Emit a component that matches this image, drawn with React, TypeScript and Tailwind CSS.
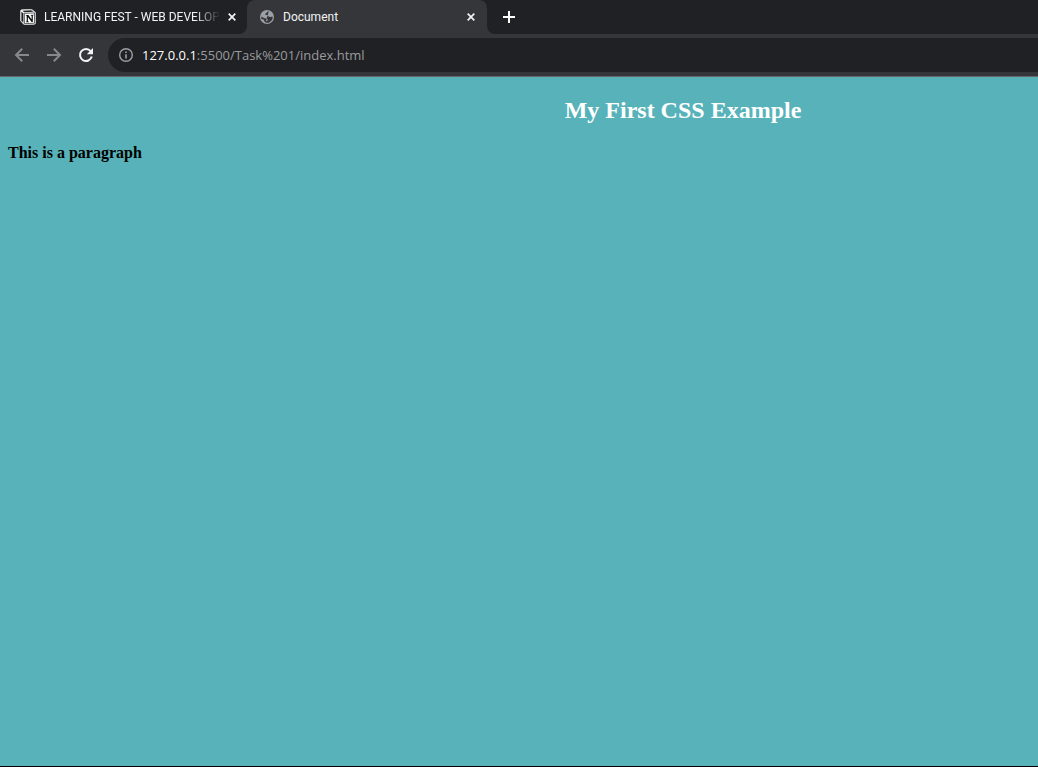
import React from "react";

const CloseIcon = () => (
  <svg width="8" height="8" viewBox="0 0 8 8" aria-hidden="true">
    <path d="M0.7 0.7 7.3 7.3M7.3 0.7 0.7 7.3" stroke="#f1f3f4" strokeWidth="1.7" fill="none" />
  </svg>
);

const NotionIcon = () => (
  <svg className="shrink-0" width="16" height="16" viewBox="0 0 16 16" aria-hidden="true">
    <path d="M1.6.8 11.6.4 15.4 3.4V14.4L14.6 15.2 4 15.6.6 11.8V1.6Z" fill="#fff" stroke="#dcdcdc" strokeWidth=".8" strokeLinejoin="round" />
    <path d="M2.4 1.7 11.2 1.2 13.4 2.7 4.2 3.3Z" fill="#202124" />
    <path d="M1.4 2.6 3.4 4.5V13.8L1.4 11.5Z" fill="#202124" />
    <path d="M4.4 4.4 14.5 3.9V14.2L4.4 14.7Z" fill="#fff" stroke="#202124" strokeWidth=".7" />
    <path d="M5.8 6.1H8.4L11.6 10.6V6.7L10.7 6.4V5.9L13.6 5.7V6.2L12.8 6.6V12.9L11.6 13.1 7.9 8V12.4L9 12.7V13.2L5.9 13.3V12.8L6.7 12.5V6.8L5.8 6.6Z" fill="#0c0c0c" />
  </svg>
);

const GlobeIcon = () => (
  <svg className="shrink-0" width="16" height="16" viewBox="0 0 16 16" aria-hidden="true">
    <circle cx="8" cy="8" r="7" fill="#9aa0a6" />
    <path
      d="M9.8 2.3C8.2 2.6 8.4 3.6 7.2 4 6.2 4.4 6 5.4 6.8 5.9 7.6 6.4 8.6 5.8 9 6.6 9.4 7.6 10 8.2 11.2 8 12.2 7.8 12.8 7.6 13.8 7.8 13.8 10.4 12 13 9.4 13.7 8.4 13.9 7.4 13.8 6.6 13.6V12.4C7.6 12.2 8.8 12 8.8 10.8 8.8 9.6 7.8 9.4 6.6 9.4 5.2 9.4 4 8.2 2.2 7.4 2.1 8.4 2.2 9.2 2.5 10 4 10.2 5.2 10.4 5.2 11.8 5.3 12.8 6 13 6.6 13.6"
      fill="#35363a"
    />
  </svg>
);

const BackIcon = () => (
  <svg width="16" height="16" viewBox="0 0 16 16" aria-hidden="true">
    <path d="M15 8H2.4M8.2 1.8 2 8 8.2 14.2" stroke="#86888a" strokeWidth="2" fill="none" />
  </svg>
);

const ForwardIcon = () => (
  <svg width="16" height="16" viewBox="0 0 16 16" aria-hidden="true">
    <path d="M1 8H13.6M7.8 1.8 14 8 7.8 14.2" stroke="#86888a" strokeWidth="2" fill="none" />
  </svg>
);

const ReloadIcon = () => (
  <svg width="16" height="16" viewBox="0 0 16 16" aria-hidden="true">
    <path d="M12.7 4.2A6 6 0 1 0 13.8 9.6" stroke="#f1f3f4" strokeWidth="2" fill="none" />
    <path d="M15 1V7.2H8.8Z" fill="#f1f3f4" />
  </svg>
);

const InfoIcon = () => (
  <svg width="16" height="16" viewBox="0 0 16 16" aria-hidden="true">
    <circle cx="8" cy="8" r="6.3" stroke="#9aa0a6" strokeWidth="1.4" fill="none" />
    <path d="M8 7.2V11.5M8 4.4V6" stroke="#9aa0a6" strokeWidth="1.6" />
  </svg>
);

const Flare = ({ className }: { className: string }) => (
  <svg className={className} width="8" height="8" viewBox="0 0 8 8" aria-hidden="true">
    <path d="M8 0V8H0A8 8 0 0 0 8 0Z" fill="#35363a" />
  </svg>
);

const TabStrip = () => (
  <div className="flex h-[34px] bg-[#202124] font-['Roboto','Noto_Sans',sans-serif] text-[12px] leading-4 text-[#f1f3f4]">
    <div className="flex w-[247px] shrink-0 items-center justify-between pr-[11px] pl-5">
      <div className="flex items-center gap-2">
        <NotionIcon />
        <span className="whitespace-nowrap [mask-image:linear-gradient(to_right,black_86%,transparent)]">
          LEARNING FEST - WEB DEVELOP
        </span>
      </div>
      <button type="button" aria-label="Close tab" className="flex">
        <CloseIcon />
      </button>
    </div>
    <div className="relative flex w-60 shrink-0 items-center rounded-t-lg bg-[#35363a] pr-3 pl-3">
      <Flare className="absolute bottom-0 -left-2" />
      <Flare className="absolute -right-2 bottom-0 -scale-x-100" />
      <GlobeIcon />
      <span className="ml-2 flex-1">Document</span>
      <button type="button" aria-label="Close tab" className="flex">
        <CloseIcon />
      </button>
    </div>
    <button type="button" aria-label="New tab" className="ml-4 flex items-center">
      <svg width="12" height="12" viewBox="0 0 12 12" aria-hidden="true">
        <path d="M6 0V12M0 6H12" stroke="#fff" strokeWidth="2" />
      </svg>
    </button>
  </div>
);

const Toolbar = () => (
  <div className="flex items-center border-b border-[#67676b] bg-[#35363a] py-1 pl-[14px]">
    <div className="flex gap-4">
      <button type="button" aria-label="Back"><BackIcon /></button>
      <button type="button" aria-label="Forward"><ForwardIcon /></button>
      <button type="button" aria-label="Reload"><ReloadIcon /></button>
    </div>
    <div className="ml-[14px] flex h-[34px] flex-1 items-center gap-2 rounded-l-full bg-[#202124] pl-[10px]">
      <button type="button" aria-label="View site information"><InfoIcon /></button>
      <a href="#page" className="text-[13px] leading-5 text-[#9a9b9d]">
        <span className="text-white">127.0.0.1</span>:5500/Task%201/index.html
      </a>
    </div>
  </div>
);

export default function App() {
  return (
    <div className="flex min-h-screen flex-col overflow-hidden border-b border-black bg-[#57b3b9] font-['Open_Sans','Noto_Sans',sans-serif]">
      <header>
        <TabStrip />
        <Toolbar />
      </header>
      <main id="page" className="min-w-[1366px] flex-1 px-2 pt-5 font-['Liberation_Serif',serif] font-bold">
        <h2 className="text-center text-[24px] leading-[27px] text-white">My First CSS Example</h2>
        <p className="mt-5 text-[16px] leading-[18px] text-black">This is a paragraph</p>
      </main>
    </div>
  );
}
